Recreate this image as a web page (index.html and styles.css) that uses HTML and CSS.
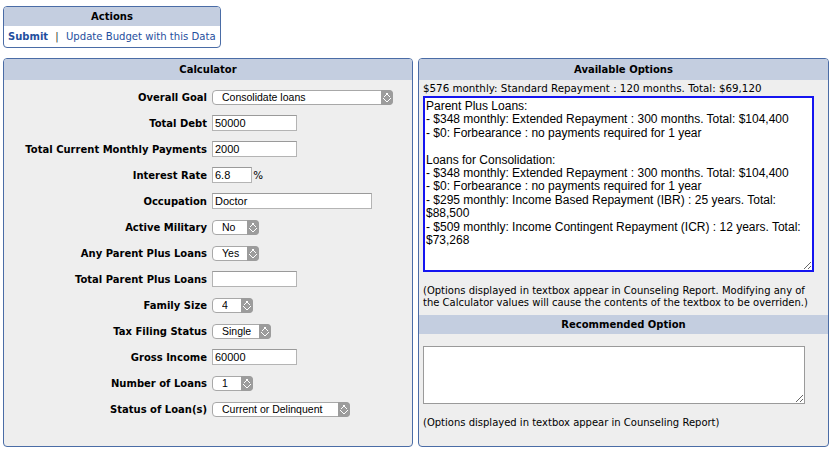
FILE: index.html
```html
<!DOCTYPE html>
<html lang="en">
<head>
    <meta charset="UTF-8">
    <meta name="viewport" content="width=device-width, initial-scale=1.0">
    <title>Repayment Calculator</title>
    <link rel="stylesheet" href="styles.css">
</head>
<body>
    <div class="panel actions">
        <div class="panel-head">Actions</div>
        <div class="actions-links">
            <a href="#" class="submit">Submit</a>
            <span class="sep">|</span>
            <a href="#">Update Budget with this Data</a>
        </div>
    </div>

    <div class="columns">
        <div class="panel calc">
            <div class="panel-head">Calculator</div>
            <div class="calc-grid">
                <label>Overall Goal</label>
                <span class="pick w181"><select><option>Consolidate loans</option></select></span>

                <label>Total Debt</label>
                <span><input type="text" class="w84" value="50000"></span>

                <label>Total Current Monthly Payments</label>
                <span><input type="text" class="w84" value="2000"></span>

                <label>Interest Rate</label>
                <span><input type="text" class="w39" value="6.8"> <span class="unit">%</span></span>

                <label>Occupation</label>
                <span><input type="text" class="w159" value="Doctor"></span>

                <label>Active Military</label>
                <span class="pick w47"><select><option>No</option></select></span>

                <label>Any Parent Plus Loans</label>
                <span class="pick w47"><select><option>Yes</option></select></span>

                <label>Total Parent Plus Loans</label>
                <span><input type="text" class="w84" value=""></span>

                <label>Family Size</label>
                <span class="pick w41"><select><option>4</option></select></span>

                <label>Tax Filing Status</label>
                <span class="pick w59"><select><option>Single</option></select></span>

                <label>Gross Income</label>
                <span><input type="text" class="w84" value="60000"></span>

                <label>Number of Loans</label>
                <span class="pick w41"><select><option>1</option></select></span>

                <label>Status of Loan(s)</label>
                <span class="pick w138"><select><option>Current or Delinquent</option></select></span>
            </div>
        </div>

        <div class="panel options">
            <div class="panel-head">Available Options</div>
            <div class="options-body">
                <div class="standard">$576 monthly: Standard Repayment : 120 months. Total: $69,120</div>
                <textarea class="report focused">Parent Plus Loans:
- $348 monthly: Extended Repayment : 300 months. Total: $104,400
- $0: Forbearance : no payments required for 1 year

Loans for Consolidation:
- $348 monthly: Extended Repayment : 300 months. Total: $104,400
- $0: Forbearance : no payments required for 1 year
- $295 monthly: Income Based Repayment (IBR) : 25 years. Total: $88,500
- $509 monthly: Income Contingent Repayment (ICR) : 12 years. Total: $73,268</textarea>
                <p class="note">(Options displayed in textbox appear in Counseling Report. Modifying any of the Calculator values will cause the contents of the textbox to be overriden.)</p>
            </div>
            <div class="panel-head sub">Recommended Option</div>
            <div class="options-body">
                <textarea class="report small"></textarea>
                <p class="note">(Options displayed in textbox appear in Counseling Report)</p>
            </div>
        </div>
    </div>
</body>
</html>
```

FILE: styles.css
```css
body {
    font-family: 'DejaVu Sans', Verdana, sans-serif;
    font-size: 10.3px;
    color: #000000;
    background-color: #ffffff;
    margin: 0;
    padding: 6px 3px;
}
a {
    color: #1f4f9e;
    text-decoration: none;
}
.panel {
    border: 1px solid #4a6ca6;
    border-radius: 4px;
    background-color: #eeeeee;
    overflow: hidden;
}
.panel-head {
    background-color: #c4cee0;
    font-weight: bold;
    font-size: 10px;
    text-align: center;
    height: 21px;
    line-height: 21px;
}
.actions {
    width: 216px;
    background-color: #ffffff;
}
.actions .panel-head {
    height: 19px;
    line-height: 20px;
}
.actions-links {
    height: 21px;
    line-height: 21px;
    padding-left: 4px;
    white-space: nowrap;
    font-size: 10.1px;
}
.actions-links .submit {
    font-weight: bold;
    font-size: 10px;
}
.actions-links .sep {
    color: #333333;
    margin: 0 4px;
}
.columns {
    display: flex;
    gap: 5px;
    margin-top: 10px;
}
.calc {
    width: 408px;
    height: 387px;
}
.options {
    width: 409px;
    height: 387px;
}
.calc-grid {
    display: grid;
    grid-template-columns: 203px 1fr;
    grid-auto-rows: 26px;
    column-gap: 5px;
    align-items: center;
    padding-top: 4px;
}
.calc-grid label {
    font-weight: bold;
    font-size: 10px;
    text-align: right;
    white-space: nowrap;
}
.calc-grid input {
    height: 16px;
    box-sizing: border-box;
    border: 1px solid #b4b4b4;
    border-top-color: #9a9a9a;
    padding: 0 2px;
    font-family: 'Liberation Sans', Arial, sans-serif;
    font-size: 11px;
    background-color: #ffffff;
    vertical-align: middle;
}
.unit {
    vertical-align: middle;
    margin-left: -2px;
}
.w39 { width: 40px; }
.w84 { width: 85px; }
.w159 { width: 160px; }
.pick {
    position: relative;
    display: inline-block;
    height: 15px;
    justify-self: start;
}
.pick.w181 { width: 181px; }
.pick.w47 { width: 47px; }
.pick.w41 { width: 41px; }
.pick.w59 { width: 59px; }
.pick.w138 { width: 138px; }
.pick select {
    appearance: none;
    -webkit-appearance: none;
    width: 100%;
    height: 15px;
    box-sizing: border-box;
    border: 1px solid #a8a8a8;
    border-radius: 4px;
    background-color: #ffffff;
    font-family: 'Liberation Sans', Arial, sans-serif;
    font-size: 10.5px;
    padding: 0 14px 0 9px;
    line-height: 13px;
    color: #000000;
    display: block;
}
.pick::after {
    content: "";
    position: absolute;
    right: 0;
    top: 0;
    width: 12px;
    height: 15px;
    border-radius: 0 4px 4px 0;
    background-color: #9c9c9c;
    background-image:
        linear-gradient(135deg, transparent 45%, #ffffff 45%, #ffffff 60%, transparent 60%),
        linear-gradient(225deg, transparent 45%, #ffffff 45%, #ffffff 60%, transparent 60%);
    background-size: 4px 4px, 4px 4px;
    background-position: 3px 3px, 5px 3px;
    background-repeat: no-repeat;
}
.pick::before {
    content: "";
    position: absolute;
    right: 0;
    top: 0;
    width: 12px;
    height: 15px;
    z-index: 1;
    background-image:
        linear-gradient(45deg, transparent 45%, #ffffff 45%, #ffffff 60%, transparent 60%),
        linear-gradient(315deg, transparent 45%, #ffffff 45%, #ffffff 60%, transparent 60%);
    background-size: 4px 4px, 4px 4px;
    background-position: 2px 8px, 6px 8px;
    background-repeat: no-repeat;
}
.options-body {
    padding: 0 4px;
}
.standard {
    height: 16px;
    line-height: 16px;
    white-space: nowrap;
}
.report {
    display: block;
    box-sizing: border-box;
    font-family: 'Liberation Sans', Arial, sans-serif;
    font-size: 12px;
    line-height: 13.4px;
    color: #000000;
    background-color: #ffffff;
    resize: both;
    margin: 0;
    outline: none;
}
.report.focused {
    width: 391px;
    height: 176px;
    border: 2px solid #1414f0;
    padding: 2px 1px;
}
.report.small {
    width: 382px;
    height: 58px;
    border: 1px solid #9a9a9a;
    margin-top: 12px;
}
.note {
    margin: 13px 0 0;
    line-height: 12px;
    font-size: 10px;
}
.sub {
    margin-top: 6px;
    height: 19px;
    line-height: 19px;
}
.options-body .note:last-child {
    margin-top: 13px;
}
```
